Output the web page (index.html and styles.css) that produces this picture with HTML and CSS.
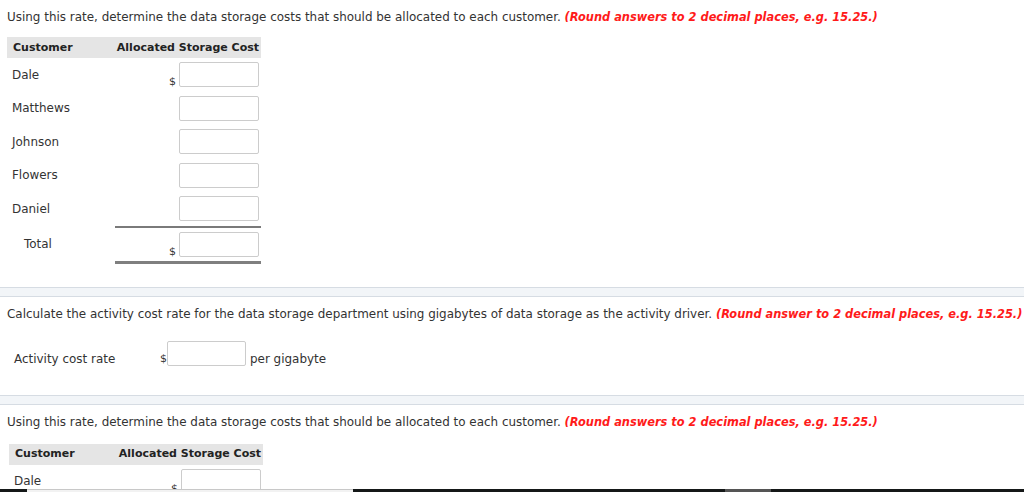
FILE: index.html
```html
<!DOCTYPE html>
<html lang="en">
<head>
<meta charset="utf-8">
<title>Allocated Storage Cost</title>
<link rel="stylesheet" href="styles.css">
</head>
<body>
<div class="section first">
  <p class="prompt">Using this rate, determine the data storage costs that should be allocated to each customer. <span class="note">(Round answers to 2 decimal places, e.g. 15.25.)</span></p>
  <table class="alloc">
    <thead>
      <tr><th class="c1">Customer</th><th class="c2">Allocated Storage Cost</th></tr>
    </thead>
    <tbody>
      <tr><td class="name">Dale</td><td class="amt"><div class="field"><span class="cur">$</span><input type="text"></div></td></tr>
      <tr><td class="name">Matthews</td><td class="amt"><div class="field"><span class="cur"></span><input type="text"></div></td></tr>
      <tr><td class="name">Johnson</td><td class="amt"><div class="field"><span class="cur"></span><input type="text"></div></td></tr>
      <tr><td class="name">Flowers</td><td class="amt"><div class="field"><span class="cur"></span><input type="text"></div></td></tr>
      <tr><td class="name">Daniel</td><td class="amt"><div class="field"><span class="cur"></span><input type="text"></div></td></tr>
      <tr class="total"><td class="name">Total</td><td class="amt"><div class="field"><span class="cur">$</span><input type="text"></div></td></tr>
    </tbody>
  </table>
</div>
<div class="band"></div>
<div class="section second">
  <p class="prompt">Calculate the activity cost rate for the data storage department using gigabytes of data storage as the activity driver. <span class="note">(Round answer to 2 decimal places, e.g. 15.25.)</span></p>
  <div class="rate">
    <span class="rate-label">Activity cost rate</span>
    <span class="cur">$</span><input type="text">
    <span class="unit">per gigabyte</span>
  </div>
</div>
<div class="band"></div>
<div class="section third">
  <p class="prompt">Using this rate, determine the data storage costs that should be allocated to each customer. <span class="note">(Round answers to 2 decimal places, e.g. 15.25.)</span></p>
  <table class="alloc">
    <thead>
      <tr><th class="c1">Customer</th><th class="c2">Allocated Storage Cost</th></tr>
    </thead>
    <tbody>
      <tr><td class="name">Dale</td><td class="amt"><div class="field"><span class="cur">$</span><input type="text"></div></td></tr>
      <tr><td class="name">Matthews</td><td class="amt"><div class="field"><span class="cur"></span><input type="text"></div></td></tr>
    </tbody>
  </table>
</div>
<div class="taskbar">
  <div class="tb-dark tb-a"></div>
  <div class="tb-light"></div>
  <div class="tb-dark tb-b"></div>
  <div class="tb-thumb"></div>
  <div class="tb-dark tb-c"></div>
</div>
</body>
</html>
```

FILE: styles.css
```css
html, body {
  margin: 0;
  padding: 0;
  background: #fff;
}
body {
  font-family: "DejaVu Sans", Verdana, sans-serif;
  font-size: 11.95px;
  line-height: 14px;
  color: #333;
}
.section {
  padding: 10px 7px 0 7px;
}
.prompt {
  margin: 0;
  height: 14px;
  white-space: nowrap;
}
.note {
  color: #ff1a1a;
  font-weight: bold;
  font-style: italic;
  font-size: 11.4px;
  line-height: 10px;
}
.alloc {
  border-collapse: collapse;
  margin-top: 13px;
}
.third .alloc {
  margin-top: 15px;
  margin-left: 2px;
}
.alloc th {
  background: #e5e5e5;
  height: 21px;
  padding: 0;
  font-size: 11px;
  font-weight: bold;
  color: #222;
}
.alloc th.c1 {
  width: 102px;
  padding-left: 6px;
  text-align: left;
}
.alloc th.c2 {
  width: 144px;
  padding-right: 2px;
  text-align: right;
}
.alloc td {
  padding: 0;
  height: 33.5px;
}
.alloc td.name {
  padding-left: 5px;
  vertical-align: middle;
}
.alloc td.amt {
  padding-right: 2px;
}
.field {
  display: flex;
  justify-content: flex-end;
  align-items: flex-end;
  gap: 3px;
}
.cur {
  font-size: 11px;
  line-height: 14px;
  margin-bottom: -2px;
}
input {
  box-sizing: border-box;
  width: 80px;
  height: 25px;
  margin: 0;
  border: 1px solid #ccc;
  border-radius: 2px;
  background: #fff;
  font: inherit;
}
.total td {
  height: 33px;
}
.total td.name {
  padding-left: 17px;
}
.total td.amt {
  border-top: 2px solid #7a7a7a;
  border-bottom: 3px solid #7f7f7f;
}
.first {
  padding-bottom: 23px;
}
.band {
  height: 8px;
  background: #f2f5f8;
  border-top: 1px solid #d6dce3;
  border-bottom: 1px solid #d6dce3;
}
.rate {
  display: flex;
  align-items: flex-end;
  margin-top: 20px;
  padding-left: 7px;
}
.rate-label {
  width: 146px;
}
.rate .cur {
  margin-bottom: 0;
  width: 7px;
}
.rate input {
  width: 79px;
  height: 25px;
}
.unit {
  margin-left: 4px;
}
.second {
  padding-bottom: 29px;
}
.taskbar {
  position: fixed;
  left: 0;
  right: 0;
  bottom: 0;
  height: 3px;
  display: flex;
}
.tb-dark {
  background: #151818;
}
.tb-a { width: 27px; }
.tb-light {
  width: 326px;
  background: #f2f2f2;
  border-top: 1px solid #c8c8c8;
  box-sizing: border-box;
}
.tb-b { width: 372px; }
.tb-thumb {
  width: 46px;
  background: #555;
}
.tb-c { flex: 1; }
```
